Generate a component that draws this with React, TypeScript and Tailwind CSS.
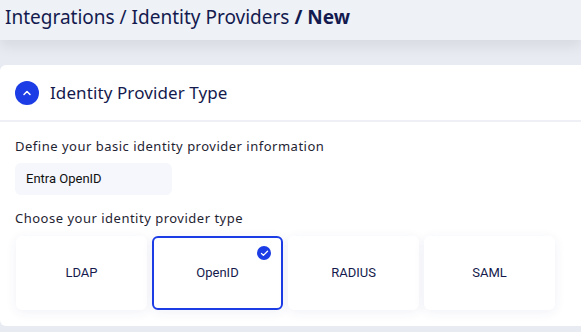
import { Check, ChevronUp } from 'lucide-react';

const types = ['LDAP', 'OpenID', 'RADIUS', 'SAML'];

export default function App() {
  const selected = 'OpenID';

  return (
    <div className="w-[581px] h-[332px] overflow-hidden bg-[#e8ebf2] font-['Noto_Sans',sans-serif]">
      {/* Breadcrumb header */}
      <header className="h-[40px] bg-[#eef1f6] flex items-center px-[5px] pb-[5px] text-[19px] text-[#131a4f] relative z-10 shadow-[0_6px_14px_rgba(0,0,0,0.08)]">
        <span>Integrations / Identity Providers</span>
        <span className="font-bold ml-[5px]">/ New</span>
      </header>

      <div className="pt-[25px]">
        <section className="bg-white rounded-l-md w-[600px] h-[261px]">
          {/* Section title */}
          <div className="h-[57px] flex items-center gap-[11px] px-[15px] border-b-2 border-[#eef0f5]">
            <div className="w-[24px] h-[24px] rounded-full bg-[#1c3de6] flex items-center justify-center">
              <ChevronUp className="w-[12px] h-[12px] text-white" strokeWidth={3} />
            </div>
            <h2 className="text-[17px] text-[#141a4d] tracking-[0.1px]">Identity Provider Type</h2>
          </div>

          <div className="px-[15px] pt-[15px]">
            <p className="text-[13px] text-[#1f2433] tracking-[0.5px]">Define your basic identity provider information</p>
            <div className="mt-[6px] w-[157px] h-[32px] rounded-md bg-[#f5f7fc] flex items-center px-[11px] font-['Roboto',sans-serif] text-[13px] text-[#111]">
              Entra OpenID
            </div>
            <p className="mt-[14px] text-[13px] text-[#1f2433] tracking-[0.5px]">Choose your identity provider type</p>

            <div className="mt-[8px] ml-[1px] flex gap-[5px]">
              {types.map(t => (
                <div
                  key={t}
                  className={`relative w-[131px] h-[74px] rounded-md flex items-center justify-center font-['Roboto',sans-serif] text-[13px] text-[#141a4d] bg-white shadow-[0_2px_12px_rgba(40,60,140,0.07)] ${
                    t === selected ? 'border-2 border-[#1c3de6]' : ''
                  }`}
                >
                  {t}
                  {t === selected && (
                    <span className="absolute top-[8px] right-[10px] w-[14px] h-[14px] rounded-full bg-[#1c3de6] flex items-center justify-center">
                      <Check className="w-[9px] h-[9px] text-white" strokeWidth={3.5} />
                    </span>
                  )}
                </div>
              ))}
            </div>
          </div>
        </section>
      </div>
    </div>
  );
}
